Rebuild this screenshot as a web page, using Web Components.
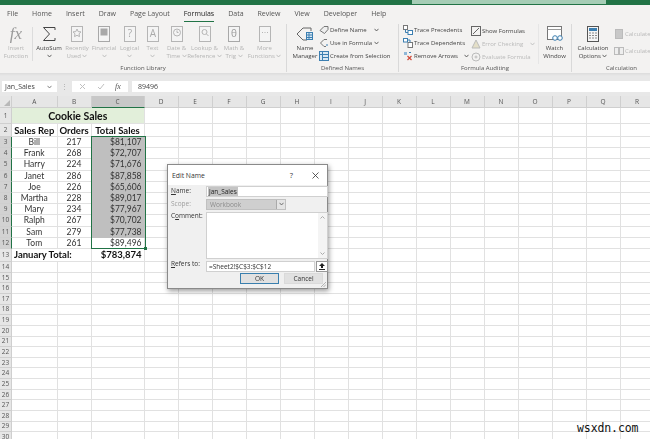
<!DOCTYPE html>
<html>
<head>
<meta charset="utf-8">
<title>Edit Name</title>
<style>
  html, body { margin: 0; height: 439px; overflow: hidden; background: #fff; font-family: "Open Sans", sans-serif; }
  svg { display: block; }
  xl-watermark { position: absolute; left: 577px; top: 421px; }
</style>
</head>
<body>

<xl-app>
  <xl-titlebar></xl-titlebar>
  <xl-tabs></xl-tabs>
  <xl-ribbon>
    <xl-group label="Function Library" width="287">
      <xl-big width="32" off l1="Insert" l2="Function">
        <span style="font:italic 17px 'Liberation Serif',serif;color:#9a9a9a;line-height:16px">fx</span>
      </xl-big>
      <xl-sep></xl-sep>
      <xl-big width="28" l1="AutoSum" caret="3" style="margin-left:2px">
        <svg width="16" height="16" viewBox="0 0 16 16" fill="none" stroke="#444" stroke-width="1"><path d="M14 4V1.5H2.5L8.5 8L2.5 14.5H14V12"/></svg>
      </xl-big>
      <xl-big width="28" off l1="Recently" l2="Used" caret="2">
        <svg width="14" height="16" viewBox="0 0 14 16" fill="#f4f4f4" stroke="#b5b5b5"><rect x="1.5" y=".5" width="11" height="15"/><path d="M7 3l1.2 2.6 2.8.3-2 1.9.5 2.8L7 9.300l-2.500 1.300.5-2.800-2-1.900 2.800-.3z"/></svg>
      </xl-big>
      <xl-big width="26" off l1="Financial" caret="2">
        <svg width="14" height="16" viewBox="0 0 14 16" fill="#f4f4f4" stroke="#a8a8a8"><rect x="1.500" y=".5" width="11" height="15"/><rect x="4" y="3" width="6" height="6" fill="#a8a8a8"/></svg>
      </xl-big>
      <xl-big width="25" off l1="Logical" caret="2">
        <svg width="14" height="16" viewBox="0 0 14 16" fill="#f4f4f4" stroke="#b5b5b5"><rect x="1.500" y=".5" width="11" height="15"/><text x="7" y="11" text-anchor="middle" font-family="Open Sans" font-size="10" stroke="none" fill="#aaa">?</text></svg>
      </xl-big>
      <xl-big width="21" off l1="Text" caret="2">
        <svg width="14" height="16" viewBox="0 0 14 16" fill="#f4f4f4" stroke="#b5b5b5"><rect x="1.500" y=".5" width="11" height="15"/><text x="7" y="11" text-anchor="middle" font-family="Open Sans" font-size="10" stroke="none" fill="#aaa">A</text></svg>
      </xl-big>
      <xl-big width="27" off l1="Date &amp;" l2="Time" caret="2">
        <svg width="14" height="16" viewBox="0 0 14 16" fill="#f4f4f4" stroke="#b5b5b5"><rect x="1.500" y=".5" width="11" height="15"/><circle cx="7" cy="6.500" r="3.500"/><path d="M7 4.500v2h1.500" fill="none"/></svg>
      </xl-big>
      <xl-big width="29" off l1="Lookup &amp;" l2="Reference" caret="2">
        <svg width="14" height="16" viewBox="0 0 14 16" fill="#f4f4f4" stroke="#b5b5b5"><rect x="1.500" y=".5" width="11" height="15"/><circle cx="6.500" cy="6" r="2.500"/><path d="M8.500 8l2 2" fill="none"/></svg>
      </xl-big>
      <xl-big width="30" off l1="Math &amp;" l2="Trig" caret="2">
        <svg width="14" height="16" viewBox="0 0 14 16" fill="#f4f4f4" stroke="#a8a8a8"><rect x="1.500" y=".5" width="11" height="15"/><text x="7" y="11" text-anchor="middle" font-family="Open Sans" font-size="10" stroke="none" fill="#999">θ</text></svg>
      </xl-big>
      <xl-big width="31" off l1="More" l2="Functions" caret="2">
        <svg width="14" height="16" viewBox="0 0 14 16" fill="#f4f4f4" stroke="#b5b5b5"><rect x="1.500" y=".5" width="11" height="15"/><path d="M4 6.500h1M6.500 6.500h1M9 6.500h1" fill="none"/></svg>
      </xl-big>
    </xl-group>

    <xl-group label="Defined Names" width="112">
      <xl-big width="28" l1="Name" l2="Manager" style="margin-left:4px">
        <svg width="18" height="16" viewBox="0 0 18 16" fill="none" stroke="#666"><path d="M1 8l6-6h8v3M1 8l6 6h4"/><rect x="10.500" y="6.500" width="6" height="7" fill="#d9e8f3" stroke="#3c7fb1"/><path d="M10.500 9h6M10.500 11.500h6M13 6.500v7" stroke="#3c7fb1"/></svg>
      </xl-big>
      <xl-col>
        <xl-small label="Define Name" caret="6">
          <svg width="10" height="10" viewBox="0 0 10 10" fill="#eee" stroke="#777"><path d="M1 5.500L5 1.500h4v3L5.500 8.500z"/></svg>
        </xl-small>
        <xl-small label="Use in Formula" caret="1">
          <svg width="10" height="10" viewBox="0 0 10 10" fill="none" stroke="#777"><path d="M8 1.500H5L1.500 5 5 8.500h2"/><path d="M7 7h2" stroke="#3c7fb1"/></svg>
        </xl-small>
        <xl-small label="Create from Selection">
          <svg width="10" height="10" viewBox="0 0 10 10" fill="#d9e8f3" stroke="#3c7fb1"><rect x=".5" y=".5" width="9" height="9"/><path d="M.5 3.500h9M3.500 .5v9M3.500 6.500h6"/></svg>
        </xl-small>
      </xl-col>
    </xl-group>

    <xl-group label="Formula Auditing" width="173">
      <xl-col style="width:68px;margin-left:4px">
        <xl-small label="Trace Precedents">
          <svg width="10" height="10" viewBox="0 0 10 10" fill="#fff" stroke="#777"><rect x=".5" y=".5" width="4" height="4"/><rect x="5" y="5.500" width="4.500" height="4" stroke="#3c7fb1"/><path d="M2.500 4.500v3H5" fill="none" stroke="#3c7fb1"/></svg>
        </xl-small>
        <xl-small label="Trace Dependents">
          <svg width="10" height="10" viewBox="0 0 10 10" fill="#fff" stroke="#777"><rect x="5" y="4.500" width="4.500" height="5"/><rect x=".5" y=".5" width="4" height="3.500" stroke="#3c7fb1"/><path d="M4.500 2H7v2.500" fill="none" stroke="#3c7fb1"/></svg>
        </xl-small>
        <xl-small label="Remove Arrows" caret="5">
          <svg width="10" height="10" viewBox="0 0 10 10" fill="none"><path d="M1 1h3v3H1z" fill="#8fb8d8"/><path d="M6 1.500h2" stroke="#3c7fb1"/><path d="M4.500 5l4 4M8.500 5l-4 4" stroke="#d04a3a" stroke-width="1.200"/></svg>
        </xl-small>
      </xl-col>
      <xl-col style="width:68px;height:40px;border-right:1px solid #e6e6e6;box-sizing:border-box">
        <xl-small label="Show Formulas">
          <svg width="10" height="10" viewBox="0 0 10 10" fill="none" stroke="#666"><rect x=".5" y=".5" width="9" height="9"/><path d="M2 8L8 2"/></svg>
        </xl-small>
        <xl-small off label="Error Checking" caret="6">
          <svg width="10" height="10" viewBox="0 0 10 10" fill="#e4dfc8" stroke="#bbb"><path d="M5 1l4 8H1z"/></svg>
        </xl-small>
        <xl-small off label="Evaluate Formula">
          <svg width="10" height="10" viewBox="0 0 10 10" fill="none" stroke="#bbb"><circle cx="5" cy="5" r="4"/><path d="M3.500 5h3M5 3.500v3"/></svg>
        </xl-small>
      </xl-col>
      <xl-big width="31" l1="Watch" l2="Window">
        <svg width="16" height="16" viewBox="0 0 16 16" fill="#fff" stroke="#777"><rect x=".5" y=".5" width="14" height="13"/><path d="M.5 3.500h14" stroke="#999"/><circle cx="8" cy="12" r="2.300" stroke="#3c7fb1"/><circle cx="13" cy="12" r="2.300" stroke="#3c7fb1"/></svg>
      </xl-big>
    </xl-group>

    <xl-group label="Calculation" width="100">
      <xl-big width="42" l1="Calculation" l2="Options" caret="2">
        <svg width="12" height="16" viewBox="0 0 12 16" fill="#fff" stroke="#555"><rect x=".5" y=".5" width="11" height="15" fill="#f5f5f5"/><rect x="2" y="2" width="8" height="3" fill="#3c7fb1" stroke="none"/><path d="M2.500 7h1M5.500 7h1M8.500 7h1M2.500 9.500h1M5.500 9.500h1M8.500 9.500h1M2.500 12h1M5.500 12h1M8.500 12h1" stroke="#222" stroke-width="1.200"/></svg>
      </xl-big>
      <xl-col style="padding-top:3px;gap:4px">
        <xl-small off label="Calculate">
          <svg width="10" height="10" viewBox="0 0 10 10" fill="#c8c8c8" stroke="#bbb"><rect x="1.500" y=".5" width="7" height="9"/></svg>
        </xl-small>
        <xl-small off label="Calculate">
          <svg width="10" height="10" viewBox="0 0 10 10" fill="#eee" stroke="#bbb"><rect x=".5" y="1.500" width="4" height="7"/><rect x="5.500" y="1.500" width="4" height="7"/></svg>
        </xl-small>
      </xl-col>
    </xl-group>
  </xl-ribbon>
  <xl-formula-bar name="Jan_Sales" value="89496"></xl-formula-bar>
  <xl-sheet></xl-sheet>
</xl-app>

<xl-edit-name></xl-edit-name>
<xl-watermark>wsxdn.com</xl-watermark>

<script>
// Small helper, every element below uses it for its shadow root.
const shadow = (el, html) => {
  el.attachShadow({ mode: 'open' }).innerHTML = html
  return el.shadowRoot
}

const caretSvg = (color) => `<svg width="5" height="4" viewBox="0 0 5 4" fill="none" stroke="${color}" stroke-width=".8"><path d="M.5 .8L2.500 3 4.500 .8"/></svg>`

customElements.define('xl-app', class extends HTMLElement {
  constructor () {
    super()
    shadow(this, `<style>
      :host { display: flex; flex-direction: column; width: 650px; height: 439px; overflow: hidden; filter: blur(.3px); }
    </style><slot></slot>`)
  }
})

customElements.define('xl-titlebar', class extends HTMLElement {
  constructor () {
    super()
    shadow(this, `<style>
      :host { display: flex; flex: none; height: 5px; background: #217346; padding-left: 412px; }
      div { width: 194px; height: 4px; background: #a6cdb6; }
    </style><div></div>`)
  }
})

customElements.define('xl-tabs', class extends HTMLElement {
  constructor () {
    super()
    const tabs = ['File', 'Home', 'Insert', 'Draw', 'Page Layout', 'Formulas', 'Data', 'Review', 'View', 'Developer', 'Help']
    shadow(this, `<style>
      :host { display: flex; flex: none; height: 19px; background: #f3f2f1; padding-left: 7px; gap: 14px; font: 7px "Open Sans", sans-serif; color: #555; }
      span { line-height: 18px; height: 16px; }
      span:first-child { margin-right: 2px; }
      .on { color: #222; border-bottom: 1.500px solid #217346; }
    </style>` + tabs.map(t => `<span class="${t === 'Formulas' ? 'on' : ''}">${t}</span>`).join(''))
  }
})

customElements.define('xl-ribbon', class extends HTMLElement {
  constructor () {
    super()
    shadow(this, `<style>
      :host { display: flex; flex: none; height: 49px; background: #f3f2f1; overflow: hidden; }
    </style><slot></slot>`)
  }
})

customElements.define('xl-group', class extends HTMLElement {
  constructor () {
    super()
    shadow(this, `<style>
      :host { display: flex; flex-direction: column; flex: none; box-sizing: border-box; width: ${this.getAttribute('width')}px; height: 48px; border-right: 1px solid #d9d9d9; }
      .body { display: flex; height: 40px; flex: none; }
      .label { font: 6px/8px "Open Sans", sans-serif; color: #555; text-align: center; white-space: nowrap; }
    </style><div class="body"><slot></slot></div><div class="label">${this.getAttribute('label')}</div>`)
  }
})

customElements.define('xl-sep', class extends HTMLElement {
  constructor () {
    super()
    shadow(this, `<style>
      :host { display: block; flex: none; width: 1px; height: 34px; margin-top: 3px; background: #dcdcdc; }
    </style>`)
  }
})

customElements.define('xl-col', class extends HTMLElement {
  constructor () {
    super()
    shadow(this, `<style>
      :host { display: flex; flex-direction: column; flex: none; height: 38px; }
    </style><slot></slot>`)
  }
})

customElements.define('xl-big', class extends HTMLElement {
  constructor () {
    super()
    const off = this.hasAttribute('off')
    const color = off ? '#b4b4b4' : '#444'
    const caret = this.getAttribute('caret')
    const line2 = this.getAttribute('l2') || ''
    const c = `<i>${caretSvg(color)}</i>`
    shadow(this, `<style>
      :host { display: flex; flex-direction: column; align-items: center; flex: none; width: ${this.getAttribute('width')}px; font: 6px/8px "Open Sans", sans-serif; color: ${color}; }
      .icon { height: 20px; padding-top: 2px; box-sizing: border-box; }
      .line { height: 8px; white-space: nowrap; display: flex; align-items: center; gap: 1.500px; justify-content: center; }
      i { display: block; }
    </style>
    <div class="icon"><slot></slot></div>
    <div class="line">${this.getAttribute('l1')}</div>
    <div class="line">${line2}${caret ? c : ''}</div>`)
  }
})

customElements.define('xl-small', class extends HTMLElement {
  constructor () {
    super()
    const color = this.hasAttribute('off') ? '#b9b9b9' : '#444'
    const caret = this.getAttribute('caret')
    shadow(this, `<style>
      :host { display: flex; align-items: center; gap: 1px; height: 13px; font: 6px "Open Sans", sans-serif; color: ${color}; white-space: nowrap; }
      i { display: block; margin-left: ${caret}px; }
    </style><slot></slot><span>${this.getAttribute('label')}</span>${caret ? `<i>${caretSvg(color)}</i>` : ''}`)
  }
})

customElements.define('xl-formula-bar', class extends HTMLElement {
  constructor () {
    super()
    shadow(this, `<style>
      :host { display: flex; flex: none; height: 23px; box-sizing: border-box; padding: 8px 0 4px 2px; background: linear-gradient(#dcdcdc, #e8e8e8 3px, #e8e8e8); font: 7px "Open Sans", sans-serif; color: #444; }
      .name { width: 55px; background: #fff; display: flex; align-items: center; justify-content: space-between; padding: 0 5px 0 3px; box-sizing: border-box; }
      .dots { width: 15px; text-align: center; line-height: 11px; color: #aaa; }
      .btns { width: 56px; background: #fff; display: flex; align-items: center; justify-content: space-around; padding: 0 2px; box-sizing: border-box; color: #b5b5b5; }
      .fx { font: italic 8px "Liberation Serif", serif; color: #555; }
      .value { flex: 1; margin-left: 4px; background: #fff; padding-left: 6px; line-height: 11px; }
    </style>
    <div class="name"><span>${this.getAttribute('name')}</span>${caretSvg('#666')}</div>
    <div class="dots">⋮</div>
    <div class="btns">
      <svg width="7" height="7" viewBox="0 0 7 7" stroke="#c0c0c0"><path d="M1 1l5 5M6 1L1 6"/></svg>
      <svg width="8" height="7" viewBox="0 0 8 7" fill="none" stroke="#c0c0c0"><path d="M1 4l2 2 4-5"/></svg>
      <span class="fx">fx</span>
    </div>
    <div class="value">${this.getAttribute('value')}</div>`)
  }
})

customElements.define('xl-sheet', class extends HTMLElement {
  constructor () {
    super()
    const data = [
      ['Bill', 217, '$81,107'], ['Frank', 268, '$72,707'], ['Harry', 224, '$71,676'],
      ['Janet', 286, '$87,858'], ['Joe', 226, '$65,606'], ['Martha', 228, '$89,017'],
      ['Mary', 234, '$77,967'], ['Ralph', 267, '$70,702'], ['Sam', 279, '$77,738'],
      ['Tom', 261, '$89,496']
    ]
    const letters = 'ABCDEFGHIJKLMNOPQR'.split('')
    let html = '<div class="h corner"><svg width="6" height="6" viewBox="0 0 6 6"><path d="M6 0v6H0z" fill="#b8b8b8"/></svg></div>'
    html += letters.map(l => `<div class="h ${l === 'C' ? 'hs' : ''}">${l}</div>`).join('')

    for (let r = 1; r <= 30; r++) {
      const selected = r >= 3 && r <= 12
      html += `<div class="h rh ${selected ? 'rs' : ''}">${r}</div>`
      if (r === 1) {
        html += '<div class="c title b" style="grid-column:span 3">Cookie Sales</div>'
      } else if (r === 2) {
        html += '<div class="c b ctr">Sales Rep</div><div class="c b ctr">Orders</div><div class="c b ctr">Total Sales</div>'
      } else if (selected) {
        const d = data[r - 3]
        html += `<div class="c ctr">${d[0]}</div><div class="c ctr">${d[1]}</div><div class="c rgt ${r < 12 ? 'gray' : ''}">${d[2]}</div>`
      } else if (r === 13) {
        html += '<div class="c b" style="grid-column:span 2;padding-left:2px">January Total:</div><div class="c b rgt">$783,874</div>'
      } else {
        html += '<div class="c"></div><div class="c"></div><div class="c"></div>'
      }
      for (let i = 3; i < letters.length; i++) html += '<div class="c"></div>'
    }

    shadow(this, `<style>
      :host {
        display: grid; flex: none; height: 347px; overflow: hidden; background: #fff; position: relative;
        grid-template-columns: 12px 45.500px 34px 53px repeat(15, 34px);
        grid-template-rows: 12px 16px 13px repeat(10, 11.200px) 13.200px repeat(17, 10.650px);
        font: 8.500px Lato, sans-serif; color: #333;
      }
      .h { background: #e6e6e6; border-right: 1px solid #cfcfcf; border-bottom: 1px solid #cfcfcf; box-sizing: border-box; font: 6.500px/8px "Open Sans", sans-serif; color: #555; display: flex; align-items: center; justify-content: center; overflow: hidden; }
      .corner { align-items: flex-end; justify-content: flex-end; padding: 0 1px 1px 0; }
      .hs { background: #c8c8c8; border-bottom: 1.500px solid #217346; }
      .rs { background: #d2d2d2; border-right: 1.500px solid #217346; }
      .c { border-right: 1px solid #e1e1e1; border-bottom: 1px solid #e1e1e1; box-sizing: border-box; display: flex; align-items: center; white-space: nowrap; overflow: hidden; }
      .b { font-weight: 700; font-size: 9.500px; color: #111; }
      .ctr { justify-content: center; }
      .rgt { justify-content: flex-end; padding-right: 2px; }
      .title { background: #e2efda; justify-content: center; font-size: 10.500px; }
      .gray { background: #bfbfbf; border-color: #bfbfbf; }
      .sel { position: absolute; grid-column: 4 / 5; grid-row: 4 / 14; inset: -1px -1px 0 -1px; border: 1.500px solid #217346; pointer-events: none; }
      .sel::after { content: ""; position: absolute; right: -2px; bottom: -2px; width: 3px; height: 3px; background: #217346; }
    </style>${html}<div class="sel"></div>`)
  }
})

customElements.define('xl-edit-name', class extends HTMLElement {
  constructor () {
    super()
    shadow(this, `<style>
      :host { position: absolute; left: 167px; top: 164px; width: 161px; height: 125px; display: flex; flex-direction: column; background: #f0f0f0; border: 1px solid #8a8a8a; box-sizing: border-box; box-shadow: 1px 2px 5px rgba(0,0,0,.4); font: 6.500px "Open Sans", sans-serif; color: #333; filter: blur(.3px); }
      .title { display: flex; align-items: center; height: 20px; flex: none; background: #fff; padding: 0 8px 0 4px; gap: 0; font-size: 6.800px; color: #333; opacity: .99; }
      .title span:first-child { flex: 1; }
      .q { margin-right: 19px; font-size: 7.500px; }
      .form { display: grid; grid-template-columns: 35px 122px; grid-template-rows: 10.500px 11px 47.500px 10.500px; row-gap: 2px; padding: 1px 0 0 3px; box-sizing: border-box; }
      label { line-height: 10px; }
      .up1 { margin-top: -1px; }
      .up2 { margin-top: -2px; }
      .muted { color: #a0a0a0; }
      .input { background: #fff; border: 1px solid #d0d0d0; box-sizing: border-box; display: flex; align-items: center; padding-left: 1px; }
      .input mark { background: #c4c4c4; color: #222; padding: 0 1px; }
      .select { display: flex; width: 80px; background: #cfcfcf; border: 1px solid #c0c0c0; box-sizing: border-box; color: #8c8c8c; align-items: center; padding-left: 3px; justify-content: space-between; }
      .select b { display: flex; align-items: center; justify-content: center; width: 8px; height: 9px; background: #e4e4e4; border-left: 1px solid #aaa; }
      .area { background: #fff; border: 1px solid #d0d0d0; box-sizing: border-box; display: flex; justify-content: flex-end; }
      .scroll { width: 9px; background: #f4f4f4; display: flex; flex-direction: column; justify-content: space-between; align-items: center; padding: 3px 0; }
      .ref { display: flex; gap: 1px; }
      .ref .input { flex: 1; color: #333; padding-left: 2px; }
      .pick { width: 12px; background: #fff; border: 1px solid #999; box-sizing: border-box; display: flex; align-items: center; justify-content: center; }
      .btns { display: flex; justify-content: flex-end; gap: 5px; padding: 1.500px 4px 0 0; }
      .btn { width: 39px; height: 11px; background: #e1e1e1; border: 1px solid #dadada; box-sizing: border-box; display: flex; align-items: center; justify-content: center; }
      .ok { border: 1.500px solid #3a7fae; }
      .grip { position: absolute; right: 1px; bottom: 1px; }
    </style>
    <div class="title"><span>Edit Name</span><span class="q">?</span>
      <svg width="7" height="7" viewBox="0 0 7 7" stroke="#333" stroke-width=".8"><path d="M.5 .5l6 6M6.500 .5l-6 6"/></svg></div>
    <div class="form">
      <label><u>N</u>ame:</label><div class="input"><mark>Jan_Sales</mark></div>
      <label class="muted">Scope:</label><div class="select">Workbook<b>${caretSvg('#555')}</b></div>
      <label class="up1">C<u>o</u>mment:</label><div class="area"><div class="scroll">
        <svg width="5" height="3" viewBox="0 0 5 3" fill="none" stroke="#aaa"><path d="M.5 2.500L2.500 .5 4.500 2.500"/></svg>
        <svg width="5" height="3" viewBox="0 0 5 3" fill="none" stroke="#aaa"><path d="M.5 .5L2.500 2.500 4.500 .5"/></svg></div></div>
      <label class="up2"><u>R</u>efers to:</label><div class="ref"><div class="input">=Sheet2!$C$3:$C$12</div>
        <div class="pick"><svg width="6" height="7" viewBox="0 0 6 7" fill="#222"><path d="M3 0l3 3H4v2H2V3H0zM0 6h6v1H0z"/></svg></div></div>
    </div>
    <div class="btns"><div class="btn ok">OK</div><div class="btn">Cancel</div></div>
    <svg class="grip" width="5" height="5" viewBox="0 0 5 5" stroke="#999" stroke-width=".7"><path d="M0 5l5-5M2.500 5L5 2.500"/></svg>`)
  }
})

customElements.define('xl-watermark', class extends HTMLElement {
  constructor () {
    super()
    shadow(this, `<style>
      :host { display: block; font: 11.500px "DejaVu Sans Mono", monospace; color: #111; letter-spacing: -.1px; line-height: 14px; }
    </style><slot></slot>`)
  }
})
</script>
</body>
</html>
